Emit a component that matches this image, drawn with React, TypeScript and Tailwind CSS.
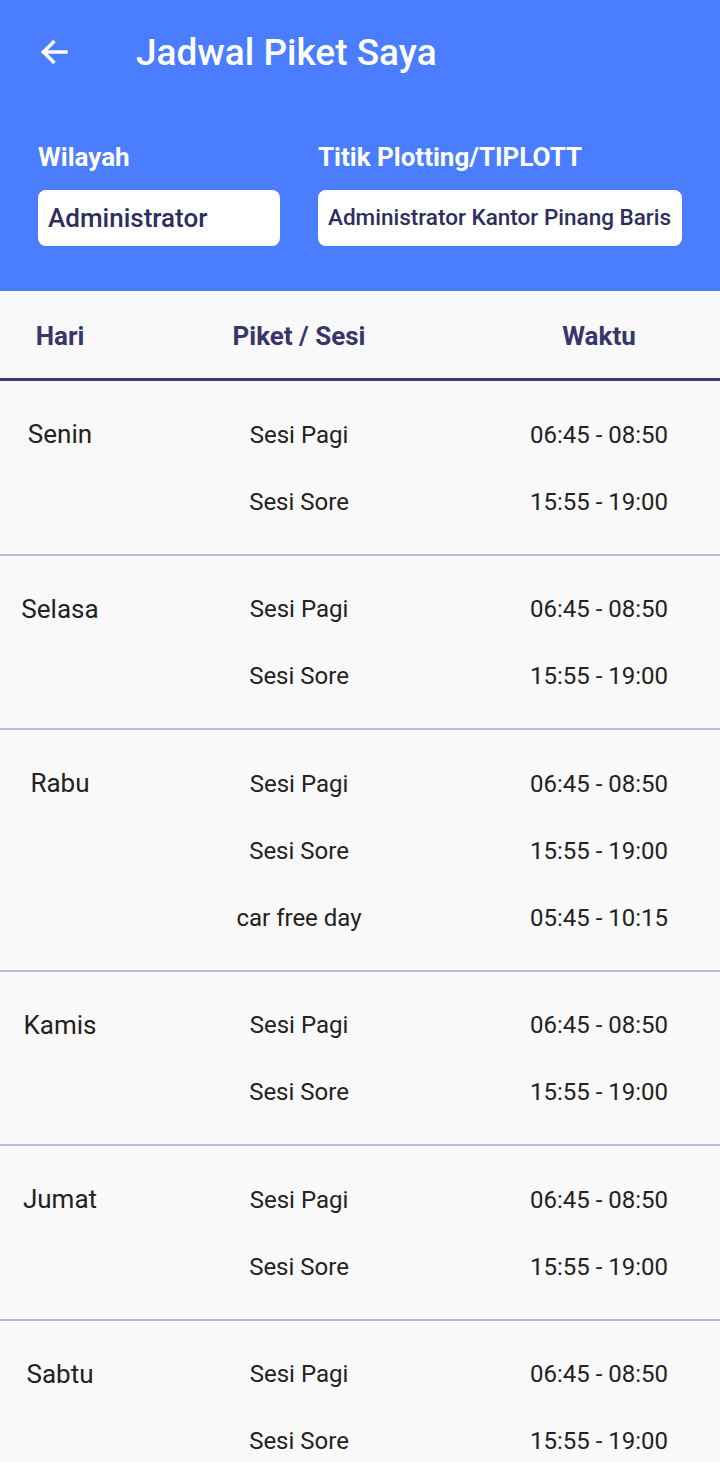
import React from "react";

type Group = { day: string; rows: [string, string][] };

const data: Group[] = [
  { day: "Senin", rows: [["Sesi Pagi", "06:45 - 08:50"], ["Sesi Sore", "15:55 - 19:00"]] },
  { day: "Selasa", rows: [["Sesi Pagi", "06:45 - 08:50"], ["Sesi Sore", "15:55 - 19:00"]] },
  { day: "Rabu", rows: [["Sesi Pagi", "06:45 - 08:50"], ["Sesi Sore", "15:55 - 19:00"], ["car free day", "05:45 - 10:15"]] },
  { day: "Kamis", rows: [["Sesi Pagi", "06:45 - 08:50"], ["Sesi Sore", "15:55 - 19:00"]] },
  { day: "Jumat", rows: [["Sesi Pagi", "06:45 - 08:50"], ["Sesi Sore", "15:55 - 19:00"]] },
  { day: "Sabtu", rows: [["Sesi Pagi", "06:45 - 08:50"], ["Sesi Sore", "15:55 - 19:00"]] },
];

export default function App() {
  return (
    <div className="w-[720px] h-[1462px] overflow-hidden bg-[#f9f9f9]" style={{ fontFamily: "Roboto, 'Noto Sans', sans-serif" }}>
      <div className="bg-[#4a7dff] h-[291px] flex flex-col">
        <div className="h-[104px] flex items-center">
          <div className="w-[136px] pl-[36px] flex items-center">
            <svg width="36" height="36" viewBox="0 0 24 24" fill="none" stroke="white" strokeWidth="2.3" strokeLinecap="square">
              <path d="M20 12H5" />
              <path d="M11.5 5.5L5 12l6.5 6.5" />
            </svg>
          </div>
          <h1 className="text-white text-[37px] font-medium leading-none">Jadwal Piket Saya</h1>
        </div>
        <div className="flex px-[38px] gap-[38px] mt-[40px]">
          <div className="w-[242px] flex flex-col">
            <div className="text-white text-[26px] font-bold leading-none h-[34px]">Wilayah</div>
            <div className="mt-[12px] bg-white rounded-[8px] h-[56px] flex items-center px-[10px] text-[#2e2d5c] text-[26px] font-medium">Administrator</div>
          </div>
          <div className="flex-1 flex flex-col">
            <div className="text-white text-[26px] font-bold leading-none h-[34px]">Titik Plotting/TIPLOTT</div>
            <div className="mt-[12px] bg-white rounded-[8px] h-[56px] flex items-center px-[10px] text-[#2e2d5c] text-[22.5px] font-medium whitespace-nowrap">Administrator Kantor Pinang Baris</div>
          </div>
        </div>
      </div>
      <div className="grid grid-cols-[120px_358px_1fr] h-[90px] pt-[4px] items-center border-b-[3px] border-[#3d3a6e] text-[#37366a] text-[26px] font-bold">
        <div className="text-center">Hari</div>
        <div className="text-center">Piket / Sesi</div>
        <div className="text-center">Waktu</div>
      </div>
      {data.map((g) => (
        <div key={g.day} className="grid grid-cols-[120px_358px_1fr] pt-[20px] pb-[18.6px] border-b-2 border-[#b4bbdc] text-[#222222]">
          <div className="h-[67px] flex items-center justify-center text-[26px]">{g.day}</div>
          <div className="flex flex-col">
            {g.rows.map((r, i) => (
              <div key={i} className="h-[67px] flex items-center justify-center text-[24px]">{r[0]}</div>
            ))}
          </div>
          <div className="flex flex-col">
            {g.rows.map((r, i) => (
              <div key={i} className="h-[67px] flex items-center justify-center text-[24px]">{r[1]}</div>
            ))}
          </div>
        </div>
      ))}
    </div>
  );
}
